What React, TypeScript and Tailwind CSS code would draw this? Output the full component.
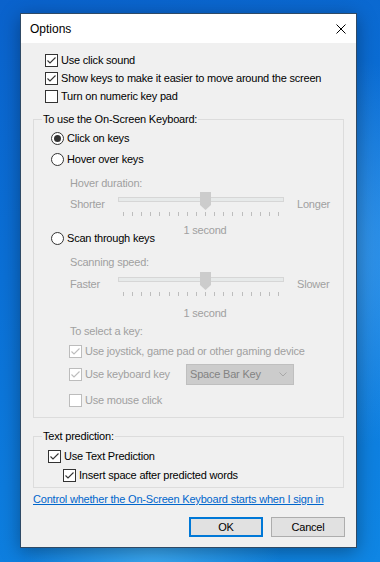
import React from "react";

const font = { fontFamily: '"Liberation Sans", Arial, sans-serif' };

function Check({ checked, disabled }: { checked?: boolean; disabled?: boolean }) {
  const stroke = disabled ? "#bcbcbc" : "#333333";
  return (
    <span
      className={
        disabled
          ? "flex h-[13px] w-[13px] shrink-0 items-center justify-center border border-[#bcbcbc] bg-white"
          : "flex h-[13px] w-[13px] shrink-0 items-center justify-center border border-[#333333] bg-white"
      }
    >
      {checked && (
        <svg width="11" height="11" viewBox="0 0 11 11">
          <path d="M1.5 5.5 L4 8 L9.5 2.5" fill="none" stroke={stroke} strokeWidth="1.1" />
        </svg>
      )}
    </span>
  );
}

function Radio({ selected }: { selected?: boolean }) {
  return (
    <svg width="13" height="13" viewBox="0 0 13 13" className="shrink-0">
      <circle cx="6.5" cy="6.5" r="6" fill="white" stroke="#333333" strokeWidth="1" />
      {selected && <circle cx="6.5" cy="6.5" r="3.5" fill="#333333" />}
    </svg>
  );
}

function SliderGraphic() {
  const ticks = Array.from({ length: 18 }, (_, i) => 5 + i * (155 / 17));
  return (
    <svg width="166" height="26" viewBox="0 0 166 26" className="shrink-0">
      <rect x="0.5" y="5.5" width="165" height="4" fill="#e7eaea" stroke="#d6d6d6" />
      {ticks.map((x, i) => (
        <line key={i} x1={Math.round(x) + 0.5} y1="20" x2={Math.round(x) + 0.5} y2="24" stroke="#bdbdbd" strokeWidth="1" />
      ))}
      <polygon points="82,0 93,0 93,13 87.5,18 82,13" fill="#cccccc" />
    </svg>
  );
}

function SliderRow({ left, right }: { left: string; right: string }) {
  return (
    <div className="flex h-[26px] items-start pl-[36px] text-[#a0a0a0]">
      <span className="mt-[4px] w-[48px] leading-[16px]">{left}</span>
      <SliderGraphic />
      <span className="ml-[13px] mt-[4px] leading-[16px]">{right}</span>
    </div>
  );
}

export default function App() {
  return (
    <div
      className="h-[562px] w-[380px] overflow-hidden bg-[radial-gradient(ellipse_at_85%_45%,rgba(90,180,250,0.55),rgba(90,180,250,0)_45%),radial-gradient(ellipse_at_40%_105%,rgba(80,190,255,0.7),rgba(80,190,255,0)_40%),linear-gradient(160deg,#0a62cc_0%,#0b70d6_40%,#0f86e4_100%)] pt-[13px] pl-[20px] text-[11px] tracking-[-0.2px] text-black"
      style={font}
    >
      <div className="flex h-[535px] w-[337px] flex-col border border-[#2f4a66] bg-[#f0f0f0] shadow-[0_4px_18px_rgba(0,0,0,0.35)]">
        {/* Title bar */}
        <div className="flex h-[29px] shrink-0 items-center justify-between bg-white pl-[9px] pr-[10px]">
          <span className="text-[12px] tracking-normal">Options</span>
          <svg width="10" height="10" viewBox="0 0 10 10">
            <path d="M0.5 0.5 L9.5 9.5 M9.5 0.5 L0.5 9.5" stroke="#000" strokeWidth="1" />
          </svg>
        </div>

        {/* Body */}
        <div className="flex flex-col pt-[8px]">
          <div className="flex h-[18px] items-center gap-[3px] pl-[24px]">
            <Check checked />
            <span>Use click sound</span>
          </div>
          <div className="flex h-[18px] items-center gap-[3px] pl-[24px]">
            <Check checked />
            <span>Show keys to make it easier to move around the screen</span>
          </div>
          <div className="flex h-[18px] items-center gap-[3px] pl-[24px]">
            <Check />
            <span>Turn on numeric key pad</span>
          </div>

          {/* Group 1 */}
          <div className="relative mx-[12px] mt-[14px] flex flex-col border border-[#dcdcdc] pb-[8px]">
            <span className="absolute left-[8px] top-[-9px] bg-[#f0f0f0] px-[1px] leading-[16px]">
              To use the On-Screen Keyboard:
            </span>
            <div className="mt-[9px] flex h-[18px] items-center gap-[3px] pl-[17px]">
              <Radio selected />
              <span>Click on keys</span>
            </div>
            <div className="mt-[3px] flex h-[18px] items-center gap-[3px] pl-[17px]">
              <Radio />
              <span>Hover over keys</span>
            </div>
            <div className="mt-[7px] h-[16px] pl-[36px] leading-[16px] text-[#a0a0a0]">Hover duration:</div>
            <div className="mt-[1px]">
              <SliderRow left="Shorter" right="Longer" />
            </div>
            <div className="mt-[4px] flex h-[16px] pl-[84px]">
              <span className="w-[174px] text-center leading-[16px] text-[#a0a0a0]">1 second</span>
            </div>
            <div className="mt-[-9px] flex h-[18px] items-center gap-[3px] pl-[17px]">
              <Radio />
              <span>Scan through keys</span>
            </div>
            <div className="mt-[7px] h-[16px] pl-[36px] leading-[16px] text-[#a0a0a0]">Scanning speed:</div>
            <div className="mt-[2px]">
              <SliderRow left="Faster" right="Slower" />
            </div>
            <div className="mt-[7px] flex h-[16px] pl-[84px]">
              <span className="w-[174px] text-center leading-[16px] text-[#a0a0a0]">1 second</span>
            </div>
            <div className="mt-[2px] h-[16px] pl-[36px] leading-[16px] text-[#a0a0a0]">To select a key:</div>
            <div className="mt-[3px] flex h-[18px] items-center gap-[3px] pl-[35px] text-[#a0a0a0]">
              <Check checked disabled />
              <span>Use joystick, game pad or other gaming device</span>
            </div>
            <div className="mt-[4px] flex h-[21px] items-center pl-[35px] text-[#a0a0a0]">
              <Check checked disabled />
              <span className="ml-[3px] w-[101px]">Use keyboard key</span>
              <div className="flex h-[21px] w-[108px] items-center justify-between border border-[#bfbfbf] bg-[#cccccc] pl-[3px] pr-[6px] text-[#838383]">
                <span>Space Bar Key</span>
                <svg width="8" height="5" viewBox="0 0 8 5">
                  <path d="M0.5 0.5 L4 4 L7.5 0.5" fill="none" stroke="#a8a8a8" strokeWidth="1" />
                </svg>
              </div>
            </div>
            <div className="mt-[6px] flex h-[18px] items-center gap-[3px] pl-[35px] text-[#a0a0a0]">
              <Check disabled />
              <span>Use mouse click</span>
            </div>
          </div>

          {/* Group 2 */}
          <div className="relative mx-[12px] mt-[18px] flex flex-col border border-[#dcdcdc] pb-[3px]">
            <span className="absolute left-[8px] top-[-9px] bg-[#f0f0f0] px-[1px] leading-[16px]">Text prediction:</span>
            <div className="mt-[10px] flex h-[18px] items-center gap-[3px] pl-[14px]">
              <Check checked />
              <span>Use Text Prediction</span>
            </div>
            <div className="mt-[1px] flex h-[18px] items-center gap-[3px] pl-[29px]">
              <Check checked />
              <span>Insert space after predicted words</span>
            </div>
          </div>

          <div className="ml-[12px] mt-[3px] h-[16px] leading-[16px]">
            <span className="text-[#0066cc] underline">Control whether the On-Screen Keyboard starts when I sign in</span>
          </div>

          <div className="mt-[10px] flex justify-end gap-[8px] pr-[11px]">
            <div className="flex h-[20px] w-[74px] items-center justify-center border-2 border-[#0078d7] bg-[#e1e1e1]">OK</div>
            <div className="flex h-[20px] w-[74px] items-center justify-center border border-[#adadad] bg-[#e1e1e1]">Cancel</div>
          </div>
        </div>
      </div>
    </div>
  );
}
